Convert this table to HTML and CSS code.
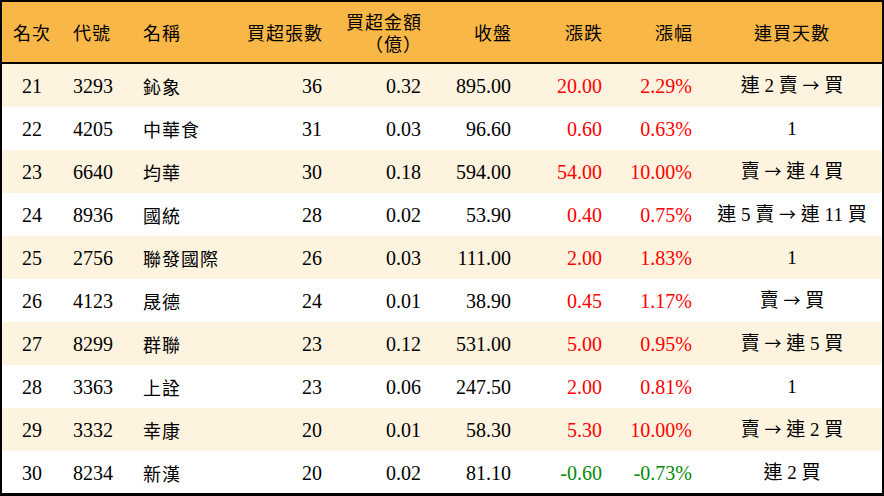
FILE: index.html
```html
<!DOCTYPE html>
<html lang="zh-Hant">
<head>
<meta charset="utf-8">
<title>買超排行</title>
<link rel="stylesheet" href="styles.css">
</head>
<body>
<div class="frame">
<table class="rank">
  <colgroup>
    <col class="c1"><col class="c2"><col class="c3"><col class="c4"><col class="c5"><col class="c6"><col class="c7"><col class="c8"><col class="c9">
  </colgroup>
  <thead>
    <tr>
      <th class="ctr">名次</th>
      <th class="lft">代號</th>
      <th class="lft">名稱</th>
      <th class="rgt">買超張數</th>
      <th class="rgt two"><span class="ln">買超金額</span><span class="ln">（億）</span></th>
      <th class="rgt">收盤</th>
      <th class="rgt">漲跌</th>
      <th class="rgt">漲幅</th>
      <th class="ctr">連買天數</th>
    </tr>
  </thead>
  <tbody>
    <tr class="odd"><td class="ctr">21</td><td class="lft">3293</td><td class="lft name">鈊象</td><td class="rgt">36</td><td class="rgt">0.32</td><td class="rgt">895.00</td><td class="rgt up">20.00</td><td class="rgt up">2.29%</td><td class="ctr days">連 2 賣 <span class="arr">→</span> 買</td></tr>
    <tr><td class="ctr">22</td><td class="lft">4205</td><td class="lft name">中華食</td><td class="rgt">31</td><td class="rgt">0.03</td><td class="rgt">96.60</td><td class="rgt up">0.60</td><td class="rgt up">0.63%</td><td class="ctr days">1</td></tr>
    <tr class="odd"><td class="ctr">23</td><td class="lft">6640</td><td class="lft name">均華</td><td class="rgt">30</td><td class="rgt">0.18</td><td class="rgt">594.00</td><td class="rgt up">54.00</td><td class="rgt up">10.00%</td><td class="ctr days">賣 <span class="arr">→</span> 連 4 買</td></tr>
    <tr><td class="ctr">24</td><td class="lft">8936</td><td class="lft name">國統</td><td class="rgt">28</td><td class="rgt">0.02</td><td class="rgt">53.90</td><td class="rgt up">0.40</td><td class="rgt up">0.75%</td><td class="ctr days">連 5 賣 <span class="arr">→</span> 連 11 買</td></tr>
    <tr class="odd"><td class="ctr">25</td><td class="lft">2756</td><td class="lft name">聯發國際</td><td class="rgt">26</td><td class="rgt">0.03</td><td class="rgt">111.00</td><td class="rgt up">2.00</td><td class="rgt up">1.83%</td><td class="ctr days">1</td></tr>
    <tr><td class="ctr">26</td><td class="lft">4123</td><td class="lft name">晟德</td><td class="rgt">24</td><td class="rgt">0.01</td><td class="rgt">38.90</td><td class="rgt up">0.45</td><td class="rgt up">1.17%</td><td class="ctr days">賣 <span class="arr">→</span> 買</td></tr>
    <tr class="odd"><td class="ctr">27</td><td class="lft">8299</td><td class="lft name">群聯</td><td class="rgt">23</td><td class="rgt">0.12</td><td class="rgt">531.00</td><td class="rgt up">5.00</td><td class="rgt up">0.95%</td><td class="ctr days">賣 <span class="arr">→</span> 連 5 買</td></tr>
    <tr><td class="ctr">28</td><td class="lft">3363</td><td class="lft name">上詮</td><td class="rgt">23</td><td class="rgt">0.06</td><td class="rgt">247.50</td><td class="rgt up">2.00</td><td class="rgt up">0.81%</td><td class="ctr days">1</td></tr>
    <tr class="odd"><td class="ctr">29</td><td class="lft">3332</td><td class="lft name">幸康</td><td class="rgt">20</td><td class="rgt">0.01</td><td class="rgt">58.30</td><td class="rgt up">5.30</td><td class="rgt up">10.00%</td><td class="ctr days">賣 <span class="arr">→</span> 連 2 買</td></tr>
    <tr><td class="ctr">30</td><td class="lft">8234</td><td class="lft name">新漢</td><td class="rgt">20</td><td class="rgt">0.02</td><td class="rgt">81.10</td><td class="rgt down">-0.60</td><td class="rgt down">-0.73%</td><td class="ctr days">連 2 買</td></tr>
  </tbody>
</table>
</div>
</body>
</html>
```

FILE: styles.css
```css
html, body {
  margin: 0;
  padding: 0;
  background: #ffffff;
}

.frame {
  width: 880px;
  height: 491px;
  overflow: hidden;
  border: 2px solid #000;
  border-bottom-width: 3px;
  background: #fff;
}

.rank {
  width: 880px;
  border-collapse: collapse;
  table-layout: fixed;
  font-family: "Liberation Serif", "Noto Sans CJK TC", serif;
  font-size: 20px;
  color: #000;
}

.c1 { width: 60px; }
.c2 { width: 70px; }
.c3 { width: 90px; }
.c4 { width: 110px; }
.c5 { width: 99px; }
.c6 { width: 90px; }
.c7 { width: 91px; }
.c8 { width: 90px; }
.c9 { width: 180px; }

.rank th {
  height: 60px;
  padding: 0;
  background: #f9b748;
  border-bottom: 2px solid #000;
  font-family: "Noto Sans CJK TC", serif;
  font-weight: normal;
  font-size: 18px;
  letter-spacing: 1px;
  line-height: 21px;
  vertical-align: middle;
  white-space: nowrap;
}

.rank th.two .ln {
  display: block;
  line-height: 22px;
}

.rank td {
  height: 43px;
  padding: 0;
  vertical-align: middle;
  white-space: nowrap;
  line-height: 22px;
}

.rank tr.odd td {
  background: #fef3de;
}

.ctr { text-align: center; }
.lft { text-align: left; padding-left: 11px !important; }
.rgt { text-align: right; padding-right: 10px !important; }

.rank th.rgt { padding-right: 9px !important; }

.name {
  font-family: "Noto Sans CJK TC", serif;
  font-size: 18px;
  letter-spacing: 1px;
}

.days {
  font-size: 19px;
}

.arr {
  font-family: "Noto Sans CJK TC", sans-serif;
  font-size: 17px;
}

.up { color: #ff0000; }
.down { color: #058a05; }
```
